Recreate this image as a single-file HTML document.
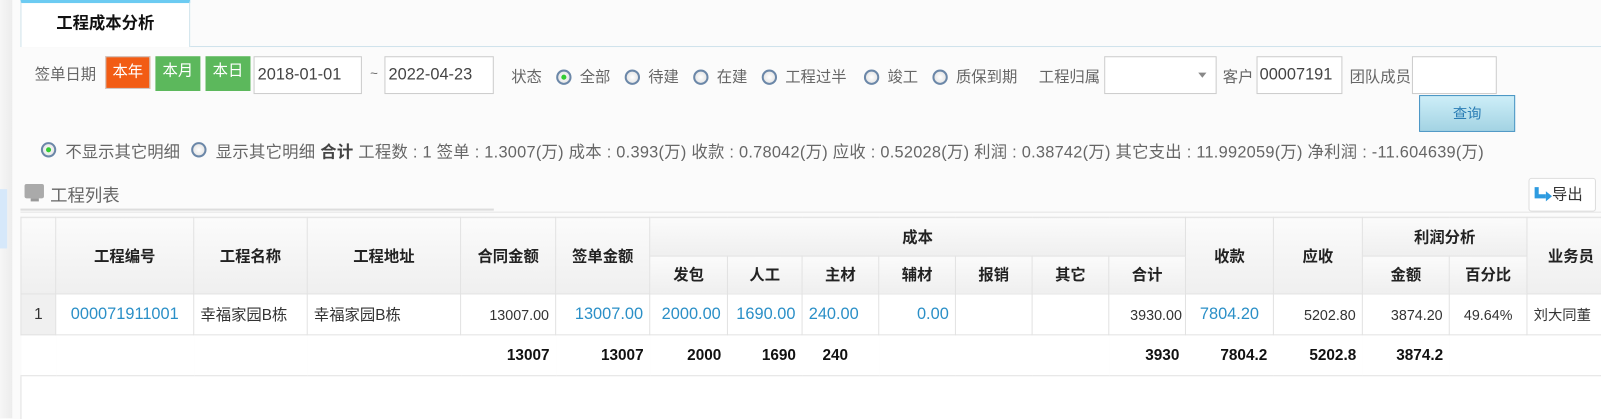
<!DOCTYPE html>
<html><head><meta charset="utf-8"><style>
*{margin:0;padding:0;box-sizing:border-box}
body{width:1601px;height:409px;overflow:hidden;background:#fbfbfb;font-family:"Liberation Sans","Noto Sans CJK SC",sans-serif;color:#666;position:relative;font-size:15px}
#w{position:absolute;left:0;top:0;width:1566px;height:400px;transform:scale(1.0224);transform-origin:0 0}
.a{position:absolute;white-space:nowrap}
.inp{position:absolute;border:1px solid #ccc;background:#fff;height:37px;font-size:16px;color:#444;line-height:35px;padding-left:3px}
.btn{position:absolute;color:#fff;font-size:15px;text-align:center;line-height:30px;height:32px;top:55px}
.rad{position:absolute;width:15px;height:15px;border-radius:50%;border:2px solid #6b87a8;background:radial-gradient(#fff,#ddd)}
.rad.on::after{content:"";position:absolute;left:3px;top:3px;width:5px;height:5px;border-radius:50%;background:#3c3}
table{position:absolute;left:20px;top:212px;border-collapse:collapse;table-layout:fixed;width:1560px}
td,th{border:1px solid #e2e2e2;font-size:15px;padding:0 6px}
th{background:linear-gradient(#fbfbfb,#efefef);color:#222;font-weight:bold;height:37px}
td{height:40px;color:#333;background:#fff;white-space:nowrap}
.r{text-align:right}.c{text-align:center}.b{color:#2a8fc7}
.tot td{font-weight:bold;color:#111;border-left:none;border-right:none}
</style></head><body><div id="w">
<div class="a" style="left:0;top:0;width:12px;height:409px;background:linear-gradient(90deg,#f6f6f6,#ececec)"></div>
<div class="a" style="left:0;top:185px;width:7px;height:58px;background:#d6e8fa"></div>
<div class="a" style="left:20px;top:45px;width:1581px;height:1px;background:#d0e3ec"></div>
<div class="a" style="left:20px;top:0;width:166px;height:46px;background:#fff;border:1px solid #d0e3ec;border-top:3px solid #6ccbf2;border-bottom:none;text-align:center;line-height:42px;font-weight:bold;font-size:16px;color:#111">工程成本分析</div>

<div class="a" style="left:34px;top:62px">签单日期</div>
<div class="btn" style="left:103px;width:44px;background:#f25c14;border:1px solid #ccc">本年</div>
<div class="btn" style="left:152px;width:44px;background:#5cb85c;height:34px">本月</div>
<div class="btn" style="left:201px;width:44px;background:#5cb85c;height:34px">本日</div>
<div class="inp" style="left:248px;top:55px;width:106px">2018-01-01</div>
<div class="a" style="left:362px;top:64px;font-size:13px">~</div>
<div class="inp" style="left:376px;top:55px;width:107px">2022-04-23</div>
<div class="a" style="left:500px;top:64px">状态</div>
<div class="rad on" style="left:544px;top:68px"></div><div class="a" style="left:567px;top:64px">全部</div>
<div class="rad" style="left:611px;top:68px"></div><div class="a" style="left:634px;top:64px">待建</div>
<div class="rad" style="left:678px;top:68px"></div><div class="a" style="left:701px;top:64px">在建</div>
<div class="rad" style="left:745px;top:68px"></div><div class="a" style="left:768px;top:64px">工程过半</div>
<div class="rad" style="left:845px;top:68px"></div><div class="a" style="left:868px;top:64px">竣工</div>
<div class="rad" style="left:912px;top:68px"></div><div class="a" style="left:935px;top:64px">质保到期</div>
<div class="a" style="left:1016px;top:64px">工程归属</div>
<div class="inp" style="left:1080px;top:55px;width:110px"></div>
<div class="a" style="left:1172px;top:71px;width:0;height:0;border-left:4px solid transparent;border-right:4px solid transparent;border-top:5px solid #888"></div>
<div class="a" style="left:1196px;top:64px">客户</div>
<div class="inp" style="left:1229px;top:55px;width:84px;padding-left:2px">00007191</div>
<div class="a" style="left:1320px;top:64px">团队成员</div>
<div class="inp" style="left:1381px;top:55px;width:83px"></div>
<div class="a" style="left:1388px;top:93px;width:94px;height:36px;border:1px solid #3d8fc0;background:linear-gradient(#cdeef8,#a3d3e3);color:#2a7db5;text-align:center;line-height:34px;font-size:14px">查询</div>

<div class="rad on" style="left:40px;top:139px"></div><div class="a" style="left:64px;top:135px;font-size:16px">不显示其它明细</div>
<div class="rad" style="left:187px;top:139px"></div><div class="a" style="left:211px;top:135px;font-size:16px;letter-spacing:0.25px">显示其它明细 <b style="color:#444">合计</b> 工程数 : 1 签单 : 1.3007(万) 成本 : 0.393(万) 收款 : 0.78042(万) 应收 : 0.52028(万) 利润 : 0.38742(万) 其它支出 : 11.992059(万) 净利润 : -11.604639(万)</div>

<div class="a" style="left:24px;top:180px;width:19px;height:14px;background:#aaa;border-radius:2px"></div>
<div class="a" style="left:30px;top:194px;width:8px;height:3px;background:#999"></div>
<div class="a" style="left:49px;top:177px;font-size:17px;color:#666">工程列表</div>
<div class="a" style="left:20px;top:204px;width:463px;height:2px;background:#ddd"></div>
<div class="a" style="left:20px;top:207px;width:1581px;height:1px;background:#e5e5e5"></div>
<div class="a" style="left:1495px;top:174px;width:66px;height:33px;border:1px solid #ddd;border-radius:3px;background:#fff;color:#333;font-size:15px;line-height:31px;padding-left:22px">导出</div>
<svg class="a" style="left:1500px;top:181px" width="20" height="18"><path d="M3 2v9h9" fill="none" stroke="#2e9be0" stroke-width="4"/><path d="M12 6l6 5-6 5z" fill="#2e9be0"/></svg>

<table>
<colgroup><col style="width:34px"><col style="width:135px"><col style="width:111px"><col style="width:150px"><col style="width:93px"><col style="width:92px"><col style="width:76px"><col style="width:73px"><col style="width:75px"><col style="width:75px"><col style="width:75px"><col style="width:75px"><col style="width:75px"><col style="width:86px"><col style="width:87px"><col style="width:85px"><col style="width:76px"><col></colgroup>
<tr><th rowspan="2" style="height:75px"></th><th rowspan="2">工程编号</th><th rowspan="2">工程名称</th><th rowspan="2">工程地址</th><th rowspan="2">合同金额</th><th rowspan="2">签单金额</th><th colspan="7">成本</th><th rowspan="2">收款</th><th rowspan="2">应收</th><th colspan="2">利润分析</th><th rowspan="2">业务员</th></tr>
<tr><th>发包</th><th>人工</th><th>主材</th><th>辅材</th><th>报销</th><th>其它</th><th>合计</th><th>金额</th><th>百分比</th></tr>
<tr><td class="c" style="background:#f0f0f0">1</td><td class="c b" style="font-size:16px">000071911001</td><td>幸福家园B栋</td><td>幸福家园B栋</td><td class="r" style="font-size:14px">13007.00</td><td class="r b" style="font-size:16px">13007.00</td><td class="r b" style="font-size:16px">2000.00</td><td class="r b" style="font-size:16px">1690.00</td><td class="r b" style="font-size:16px;padding-right:20px">240.00</td><td class="r b" style="font-size:16px">0.00</td><td></td><td></td><td class="r" style="font-size:14px;padding-right:3px">3930.00</td><td class="c b" style="font-size:16px">7804.20</td><td class="r" style="font-size:14px">5202.80</td><td class="r" style="font-size:14px">3874.20</td><td class="c" style="font-size:14px">49.64%</td><td style="font-size:14px">刘大同董</td></tr>
<tr class="tot"><td></td><td></td><td></td><td></td><td class="r">13007</td><td class="r">13007</td><td class="r">2000</td><td class="r">1690</td><td class="r" style="padding-right:30px">240</td><td></td><td></td><td></td><td class="r">3930</td><td class="r">7804.2</td><td class="r">5202.8</td><td class="r">3874.2</td><td></td><td></td></tr>
<tr><td colspan="18" style="height:42px;border-bottom:none;border-right:none"></td></tr>
</table>
</div></body></html>
